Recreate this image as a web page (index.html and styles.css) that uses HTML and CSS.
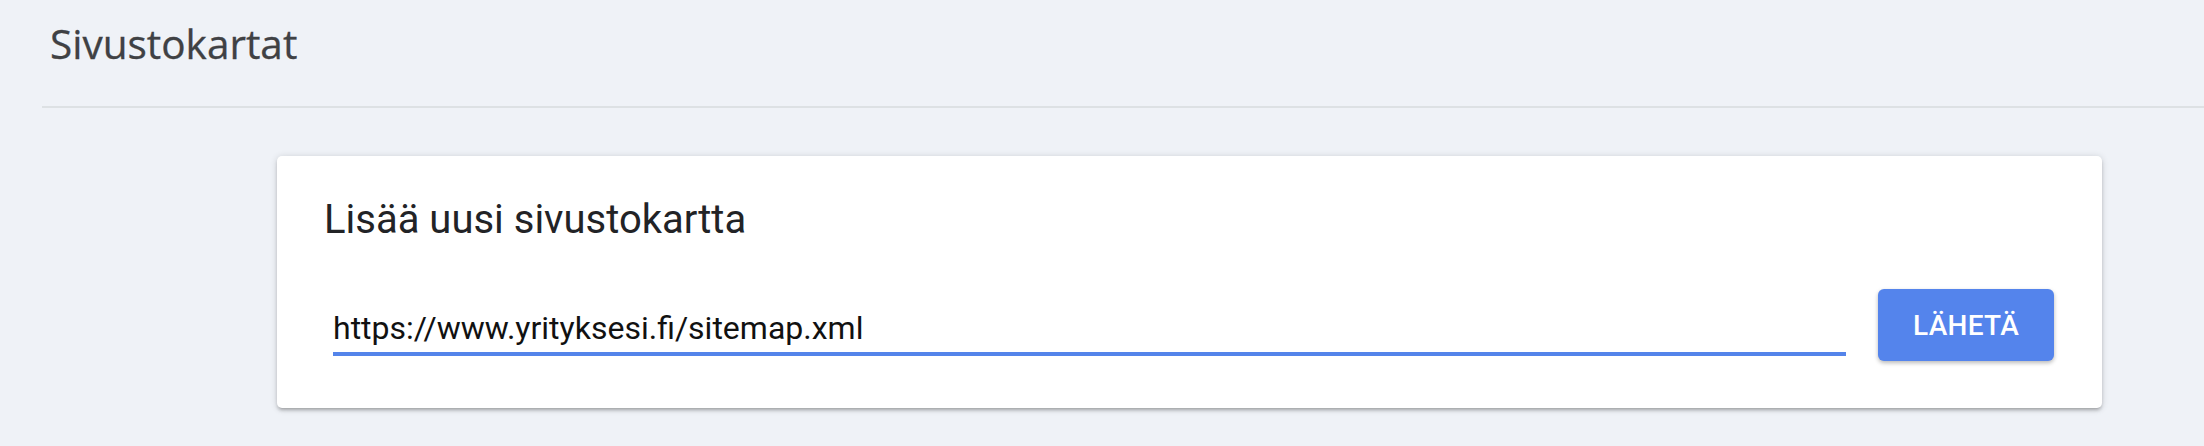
FILE: index.html
```html
<!DOCTYPE html>
<html lang="fi">
<head>
<meta charset="utf-8">
<title>Sivustokartat</title>
<link rel="stylesheet" href="styles.css">
</head>
<body>
<header class="page-header">
  <h1 class="page-title">Sivustokartat</h1>
  <div class="divider"></div>
</header>
<main class="content">
  <section class="card">
    <h2 class="card-title">Lisää uusi sivustokartta</h2>
    <div class="form-row">
      <div class="text-field" role="textbox">https://www.yrityksesi.fi/sitemap.xml</div>
      <button class="submit-btn" type="button">LÄHETÄ</button>
    </div>
  </section>
</main>
</body>
</html>
```

FILE: styles.css
```css
html, body {
  margin: 0;
  padding: 0;
}

body {
  background: #eff2f7;
  width: 2204px;
  height: 446px;
  overflow: hidden;
  font-family: Roboto, "Liberation Sans", sans-serif;
}

.page-header {
  padding-left: 42px;
}

.page-title {
  margin: 0;
  padding: 20px 0 0 8px;
  font-family: "Open Sans", "Noto Sans", sans-serif;
  font-weight: 400;
  font-size: 40.5px;
  line-height: 48px;
  color: #3f4144;
  -webkit-text-stroke: 0.3px #3f4144;
}

.divider {
  margin-top: 38px;
  height: 2px;
  background: #dde1e4;
}

.content {
  padding: 48px 102px 0 277px;
}

.card {
  background: #ffffff;
  border-radius: 5px;
  padding: 40px 48px 47px 47px;
  box-shadow: 0 3px 3px rgba(0, 0, 0, 0.14), 0 4px 2px -3px rgba(0, 0, 0, 0.12), 0 1px 7px rgba(0, 0, 0, 0.16);
}

.card-title {
  margin: 0;
  font-weight: 400;
  font-size: 40px;
  line-height: 48px;
  color: #222326;
}

.form-row {
  margin-top: 45px;
  display: flex;
  align-items: flex-end;
  gap: 32px;
}

.text-field {
  flex: 1;
  margin: 0 0 5px 9px;
  font-size: 32px;
  line-height: 38px;
  color: #111111;
  padding-bottom: 5px;
  border-bottom: 4px solid #5484ea;
}

.submit-btn {
  width: 176px;
  height: 72px;
  border: 0;
  border-radius: 6px;
  background: #5484ec;
  color: #ffffff;
  font-family: Roboto, "Liberation Sans", sans-serif;
  font-weight: 500;
  font-size: 28px;
  letter-spacing: 0.3px;
  box-shadow: 0 2px 4px rgba(0, 0, 0, 0.28);
  display: flex;
  align-items: center;
  justify-content: center;
  padding: 0;
}
```
